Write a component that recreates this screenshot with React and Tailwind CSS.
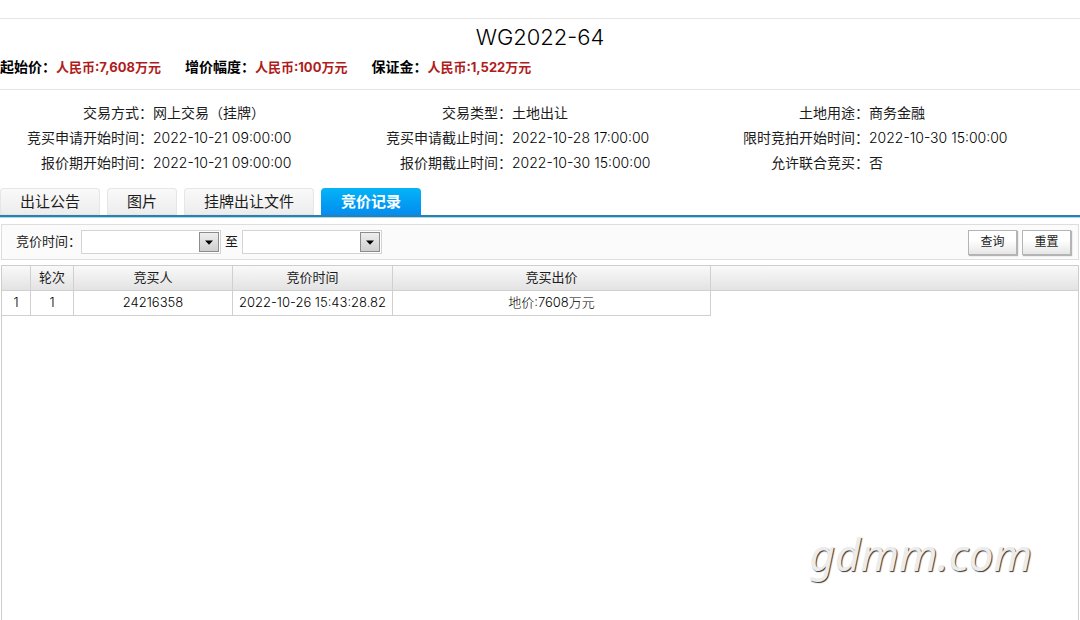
import { useState } from "react";

const prices = [
    { label: "起始价", value: "人民币:7,608万元" },
    { label: "增价幅度", value: "人民币:100万元" },
    { label: "保证金", value: "人民币:1,522万元" },
];

const details = [
    [
        { label: "交易方式", value: "网上交易（挂牌）" },
        { label: "竞买申请开始时间", value: "2022-10-21 09:00:00", date: true },
        { label: "报价期开始时间", value: "2022-10-21 09:00:00", date: true },
    ],
    [
        { label: "交易类型", value: "土地出让" },
        { label: "竞买申请截止时间", value: "2022-10-28 17:00:00", date: true },
        { label: "报价期截止时间", value: "2022-10-30 15:00:00", date: true },
    ],
    [
        { label: "土地用途", value: "商务金融" },
        { label: "限时竞拍开始时间", value: "2022-10-30 15:00:00", date: true },
        { label: "允许联合竞买", value: "否" },
    ],
];

const tabs = ["出让公告", "图片", "挂牌出让文件", "竞价记录"];

const records = [
    { round: 1, bidder: "24216358", time: "2022-10-26 15:43:28.82", price: "地价:7608万元" },
];

function DateField({ id, label, value, onChange }) {
    return (
        <div className="flex h-6 w-[140px] items-center border border-[#d4d4d4] bg-white pr-px">
            <input
                id={id}
                aria-label={label}
                className="h-full w-full min-w-0 flex-1 bg-transparent px-1 text-[12px] outline-none"
                value={value}
                onChange={(e) => onChange(e.target.value)}
            />
            <button
                type="button"
                aria-label="选择日期"
                className="flex h-5 w-5 shrink-0 items-center justify-center border border-[#8c8c8c] bg-linear-to-b from-[#eeeeee] to-[#cfcfcf]"
            >
                <svg width="8" height="5" viewBox="0 0 8 5">
                    <path d="M0 0.5h8L4 4.8z" fill="#000" />
                </svg>
            </button>
        </div>
    );
}

function ToolButton({ children, onClick }) {
    return (
        <button
            type="button"
            onClick={onClick}
            className="h-[25px] w-[49px] border border-[#b4b4b4] bg-linear-to-b from-white from-40% to-[#e6e6e6] text-[12px] leading-none shadow-[1px_1px_1px_#b4b4b4]"
        >
            {children}
        </button>
    );
}

export default function App() {

    const [active, setActive] = useState("竞价记录");
    const [from, setFrom] = useState("");
    const [to, setTo] = useState("");

    function reset() {
        setFrom("");
        setTo("");
    }

    return (
        <div className="relative flex min-h-screen flex-col bg-white pt-[18px] font-['Inter','Noto_Sans_CJK_SC',sans-serif] text-[14px] text-[#1c1c1c]">

            <header className="border-y border-[#e4e4e4] pb-2.5">
                <h1 className="text-center text-[22px] leading-9 font-light text-black">WG2022-64</h1>
                <dl className="flex gap-6 leading-6 font-bold">
                    {prices.map((p) => (
                        <div key={p.label} className="flex">
                            <dt className="text-black">{p.label}：</dt>
                            <dd className="text-[13px] text-[#b01c1c]">{p.value}</dd>
                        </div>
                    ))}
                </dl>
            </header>

            <section className="grid grid-cols-[359fr_357fr_364fr] pt-2.5 pb-[13px]">
                {details.map((column, i) => (
                    <dl key={i}>
                        {column.map((item) => (
                            <div key={item.label} className="flex leading-[25px]">
                                <dt className="w-[153px] shrink-0 text-right">{item.label}：</dt>
                                <dd className={item.date ? "font-light text-black" : ""}>{item.value}</dd>
                            </div>
                        ))}
                    </dl>
                ))}
            </section>

            <nav className="flex gap-[7px] border-b-2 border-[#2f7fab] shadow-[0_1px_0_#a9dcf2]" role="tablist">
                {tabs.map((tab) => (
                    <button
                        key={tab}
                        type="button"
                        role="tab"
                        aria-selected={active === tab}
                        onClick={() => setActive(tab)}
                        className={
                            active === tab
                                ? "h-[27px] rounded-t-sm bg-linear-to-b from-[#06b4f6] to-[#068cf0] px-5 text-[15px] leading-none font-bold text-white"
                                : "h-[27px] rounded-t-sm bg-linear-to-b from-[#fafafa] to-[#ececec] px-5 text-[15px] leading-none shadow-[inset_0_0_0_1px_#e6e6e6]"
                        }
                    >
                        {tab}
                    </button>
                ))}
            </nav>

            <main className="flex flex-1 flex-col px-px pt-[7px]">
                <form className="flex h-9 items-center justify-between border border-[#dedede] bg-[#fbfbfb] pr-[7px] pl-3.5 text-[13px]">
                    <div className="flex items-center">
                        <label htmlFor="from">竞价时间：</label>
                        <DateField id="from" label="竞价时间起" value={from} onChange={setFrom} />
                        <label htmlFor="to" className="px-1">至</label>
                        <DateField id="to" label="竞价时间止" value={to} onChange={setTo} />
                    </div>
                    <div className="flex gap-[5px]">
                        <ToolButton>查询</ToolButton>
                        <ToolButton onClick={reset}>重置</ToolButton>
                    </div>
                </form>

                <div className="mt-[5px] flex-1 border border-b-0 border-[#cdcdcd]">
                    <table className="w-full table-fixed border-separate border-spacing-0 text-center text-[13px]">
                        <colgroup>
                            <col className="w-[29px]" />
                            <col className="w-[43px]" />
                            <col className="w-[159px]" />
                            <col className="w-[160px]" />
                            <col className="w-[318px]" />
                            <col />
                        </colgroup>
                        <thead>
                            <tr className="h-[25px] bg-linear-to-b from-[#f9f9f9] to-[#e2e2e2] *:border-b *:border-[#d0d0d0] *:font-normal">
                                <th className="border-r"></th>
                                <th className="border-r">轮次</th>
                                <th className="border-r">竞买人</th>
                                <th className="border-r">竞价时间</th>
                                <th className="border-r">竞买出价</th>
                                <th></th>
                            </tr>
                        </thead>
                        <tbody>
                            {records.map((r, i) => (
                                <tr key={i} className="h-[25px] text-black *:border-[#d0d0d0]">
                                    <td className="border-r border-b font-light">{i + 1}</td>
                                    <td className="border-r border-b font-light">{r.round}</td>
                                    <td className="border-r border-b font-light">{r.bidder}</td>
                                    <td className="border-r border-b font-light">{r.time}</td>
                                    <td className="border-r border-b font-light">{r.price}</td>
                                    <td></td>
                                </tr>
                            ))}
                        </tbody>
                    </table>
                </div>
            </main>

            {/* watermark */}
            <div className="pointer-events-none absolute right-12 bottom-9 font-['Noto_Sans',sans-serif] text-[44px] leading-[60px] text-[#ececec] italic [text-shadow:1px_1px_1px_#333]">
                gdmm.com
            </div>

        </div>
    );
}
